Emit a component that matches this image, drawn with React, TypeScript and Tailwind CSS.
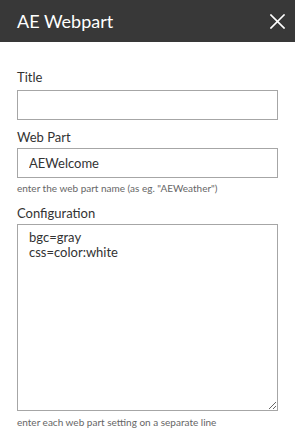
import React, { useState } from 'react';

// Close icon, thin cross like the Fluent "Cancel" glyph
const CloseIcon = () => (
  <svg width="15" height="15" viewBox="0 0 15 15" fill="none" stroke="currentColor" strokeWidth="1.6" strokeLinecap="square">
    <path d="M1 1L14 14" />
    <path d="M14 1L1 14" />
  </svg>
);

export default function App() {
  const [title, setTitle] = useState('');
  const [webPart, setWebPart] = useState('AEWelcome');
  const [config, setConfig] = useState('bgc=gray\ncss=color:white');

  return (
    <div className="w-[295px] h-[432px] bg-white font-['Lato',sans-serif] text-[#333333] overflow-hidden">
      {/* Header */}
      <div className="h-[42px] bg-[#383838] flex items-center justify-between pl-[17px] pr-[10px]">
        <h1 className="text-[18px] leading-none text-white">AE Webpart</h1>
        <button className="text-white w-[15px] h-[15px] flex items-center justify-center">
          <CloseIcon />
        </button>
      </div>

      {/* Form */}
      <div className="px-[17px] pt-[25px] flex flex-col">
        <label className="text-[13px] leading-[20px]">Title</label>
        <input
          type="text"
          value={title}
          onChange={(e) => setTitle(e.target.value)}
          className="mt-[3px] h-[30px] w-full border border-[#a6a6a6] px-[11px] text-[13px] outline-none"
        />

        <label className="mt-[7px] text-[13px] leading-[20px]">Web Part</label>
        <input
          type="text"
          value={webPart}
          onChange={(e) => setWebPart(e.target.value)}
          className="mt-[1px] h-[30px] w-full border border-[#a6a6a6] px-[11px] text-[13px] text-[#333333] outline-none"
        />
        <p className="mt-[3px] text-[10px] leading-[14px] text-[#666666]">enter the web part name (as eg. "AEWeather")</p>

        <label className="mt-[8px] text-[13px] leading-[20px]">Configuration</label>
        <textarea
          value={config}
          onChange={(e) => setConfig(e.target.value)}
          className="mt-[1px] h-[187px] w-full border border-[#a6a6a6] px-[11px] py-[5px] text-[13px] leading-[15px] text-[#333333] outline-none"
        />
        <p className="mt-[4px] text-[10px] leading-[14px] text-[#666666]">enter each web part setting on a separate line</p>
      </div>
    </div>
  );
}
